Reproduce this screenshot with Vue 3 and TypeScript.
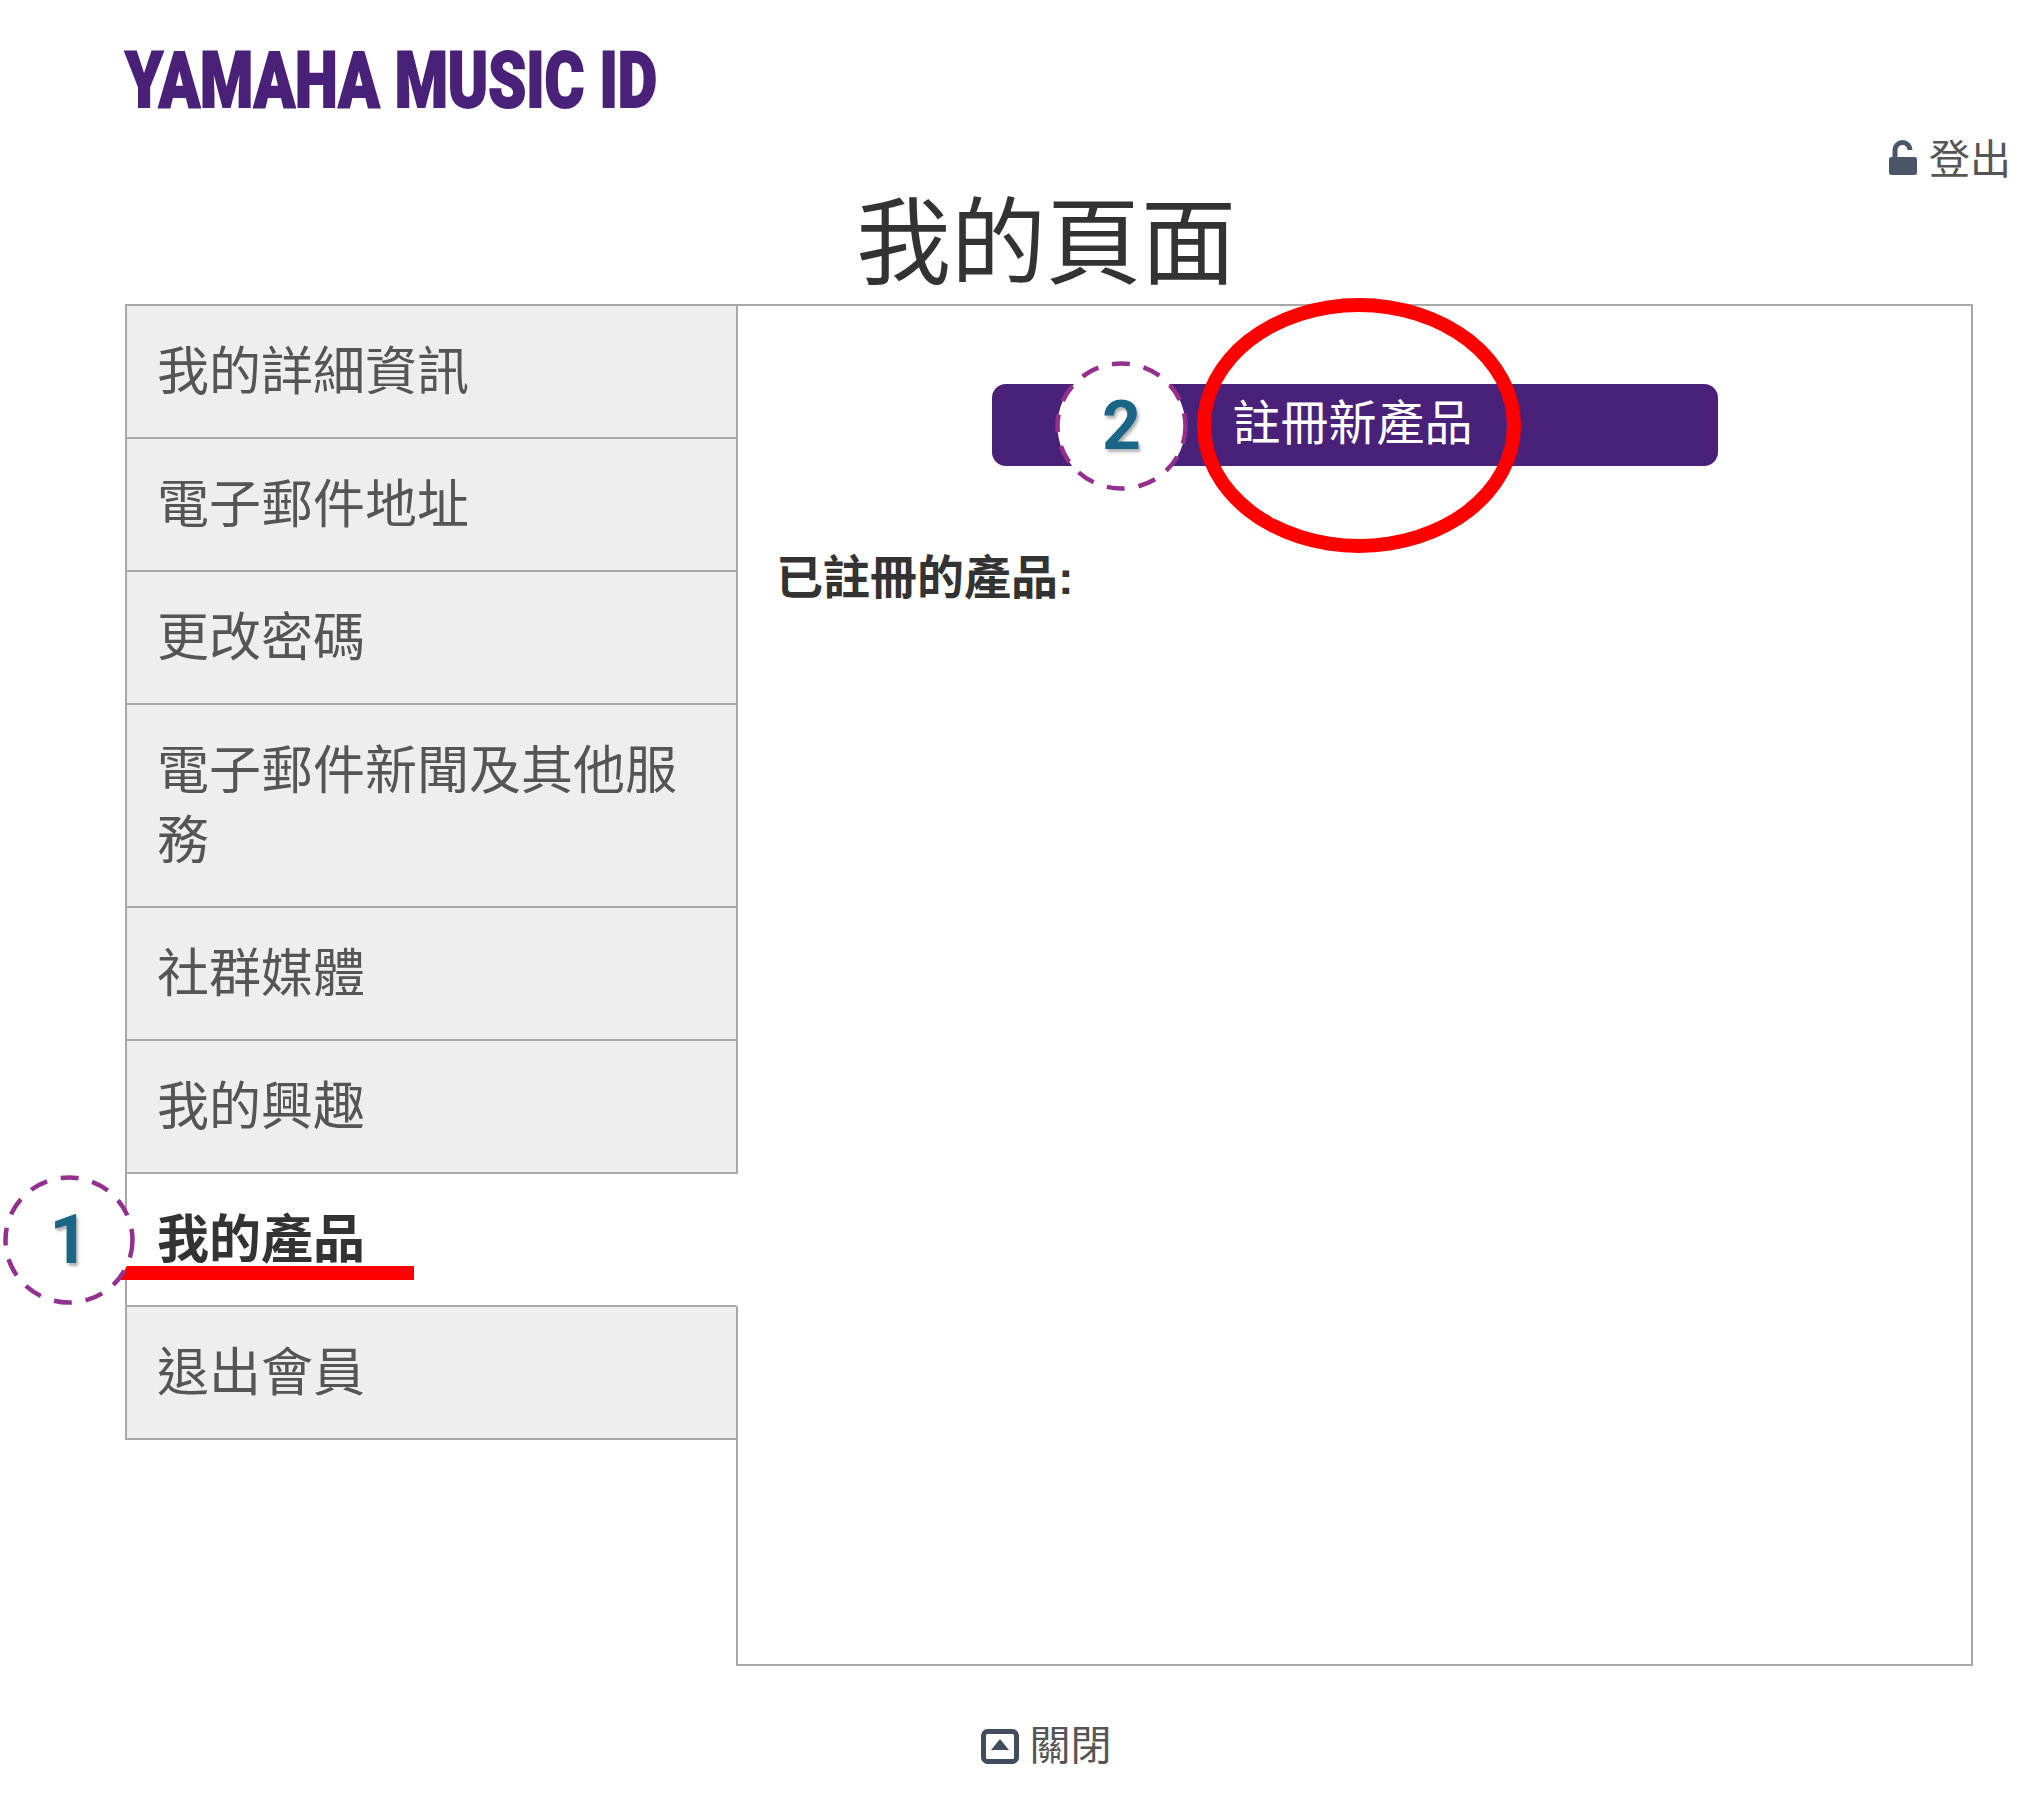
<script setup lang="ts">
interface MenuItem {
  label: string
  active?: boolean
}

const menu: MenuItem[] = [
  { label: '我的詳細資訊' },
  { label: '電子郵件地址' },
  { label: '更改密碼' },
  { label: '電子郵件新聞及其他服務' },
  { label: '社群媒體' },
  { label: '我的興趣' },
  { label: '我的產品', active: true },
  { label: '退出會員' },
]
</script>

<template>
  <div class="page">
    <div class="logo"><span class="logo-text">YAMAHA MUSIC ID</span></div>

    <div class="logout">
      <svg class="lock" viewBox="0 0 28 35" width="28" height="35">
        <path d="M6 18V10a7.5 7.5 0 0 1 15 0" fill="none" stroke="#4a5668" stroke-width="5" />
        <rect x="0" y="17" width="28" height="18" rx="2.5" fill="#4a5668" />
      </svg>
      <span>登出</span>
    </div>

    <h1 class="title">我的頁面</h1>

    <main class="panel">
      <ul class="menu">
        <li v-for="item in menu" :key="item.label" class="menu-item" :class="{ active: item.active }">
          {{ item.label }}
        </li>
      </ul>

      <section class="content">
        <div class="register-btn">註冊新產品</div>
        <p class="registered">已註冊的產品:</p>
      </section>

      <!-- annotations drawn on top of the screenshot -->
      <div class="underline"></div>
      <div class="ring ring-one">
        <svg viewBox="0 0 132 130" width="132" height="130">
          <ellipse cx="66" cy="65" rx="63.5" ry="62.5" fill="#fff" stroke="#93308f" stroke-width="4.5" stroke-dasharray="18 14" />
        </svg>
        <span class="ring-num">1</span>
      </div>
      <div class="ring ring-two">
        <svg viewBox="0 0 133 130" width="133" height="130">
          <ellipse cx="66.5" cy="65" rx="64" ry="62.5" fill="#fff" stroke="#93308f" stroke-width="4.5" stroke-dasharray="18 14" />
        </svg>
        <span class="ring-num">2</span>
      </div>
      <div class="red-circle"></div>
    </main>

    <div class="close">
      <svg viewBox="0 0 38 35" width="38" height="35">
        <rect x="2.5" y="2.5" width="33" height="30" rx="4" fill="none" stroke="#414c5e" stroke-width="5" />
        <path d="M19 10l9 11H10z" fill="#414c5e" />
      </svg>
      <span>關閉</span>
    </div>
  </div>
</template>

<style scoped>
.page {
  width: 2042px;
  height: 1794px;
  box-sizing: border-box;
  padding: 43px 34px 0 125px;
  background: #fff;
  color: #555;
  font-family: "Liberation Sans", "Noto Sans CJK TC", sans-serif;
  overflow: hidden;
}

.logo {
  height: 76px;
}

.logo-text {
  display: inline-block;
  font-family: "Roboto", "Liberation Sans", sans-serif;
  font-size: 78px;
  font-weight: 900;
  line-height: 76px;
  color: #4a2178;
  white-space: nowrap;
  -webkit-text-stroke: 2px #4a2178;
  transform: scaleX(0.778);
  transform-origin: left center;
}

.logout {
  display: flex;
  justify-content: flex-end;
  align-items: center;
  gap: 11px;
  margin-top: 18px;
  margin-right: -3px;
  font-size: 41px;
  line-height: 46px;
  color: #555;
}

.lock {
  margin-top: -5px;
  margin-right: 1px;
}

.title {
  margin: 3px 0 2px;
  padding-right: 41px;
  text-align: center;
  font-size: 95px;
  font-weight: 400;
  line-height: 116px;
  color: #333;
}

.panel {
  position: relative;
  display: flex;
  height: 1362px;
  margin-right: 35px;
}

.menu {
  position: relative;
  z-index: 1;
  flex: 0 0 613px;
  margin: 0;
  padding: 0;
  list-style: none;
}

.menu-item {
  box-sizing: border-box;
  padding: 30.5px 30px;
  background: #eee;
  border: 2px solid #a8a8a8;
  border-top: 0;
  font-size: 52px;
  line-height: 70px;
  color: #555;
}

.menu-item:first-child {
  border-top: 2px solid #a8a8a8;
}

.menu-item.active {
  background: #fff;
  border-right-color: #fff;
  font-weight: 700;
  color: #333;
}

.content {
  flex: 1;
  margin-left: -2px;
  border: 2px solid #a8a8a8;
  padding: 78px 40px 0 38px;
}

.register-btn {
  width: 726px;
  height: 82px;
  margin: 0 auto;
  border-radius: 14px;
  background: #4a2178;
  color: #fff;
  font-size: 48px;
  line-height: 80px;
  text-align: center;
  text-indent: -4px;
  transform: translateX(1px);
}

.registered {
  margin: 82px 0 0;
  font-size: 47px;
  font-weight: 700;
  line-height: 60px;
  color: #333;
}

.underline {
  position: absolute;
  z-index: 2;
  left: -4px;
  top: 962px;
  width: 293px;
  height: 14px;
  background: #f00;
}

.ring {
  position: absolute;
  z-index: 3;
  display: flex;
  align-items: center;
  justify-content: center;
}

.ring svg {
  position: absolute;
  inset: 0;
}

.ring-one {
  left: -122px;
  top: 871px;
  width: 132px;
  height: 130px;
}

.ring-two {
  left: 930px;
  top: 57px;
  width: 133px;
  height: 130px;
}

.ring-num {
  position: relative;
  font-family: "Roboto", "Liberation Sans", sans-serif;
  font-size: 68px;
  font-weight: 700;
  line-height: 1;
  color: #1b6687;
  text-shadow: 2px 3px 3px rgba(0, 0, 0, 0.3);
}

.red-circle {
  position: absolute;
  z-index: 4;
  left: 1072px;
  top: -6px;
  width: 324px;
  height: 255px;
  box-sizing: border-box;
  border: 14px solid #f00;
  border-radius: 50%;
}

.close {
  display: flex;
  justify-content: center;
  align-items: center;
  gap: 11px;
  margin-top: 55px;
  padding-right: 41px;
  font-size: 41px;
  line-height: 50px;
  color: #555;
}
</style>
